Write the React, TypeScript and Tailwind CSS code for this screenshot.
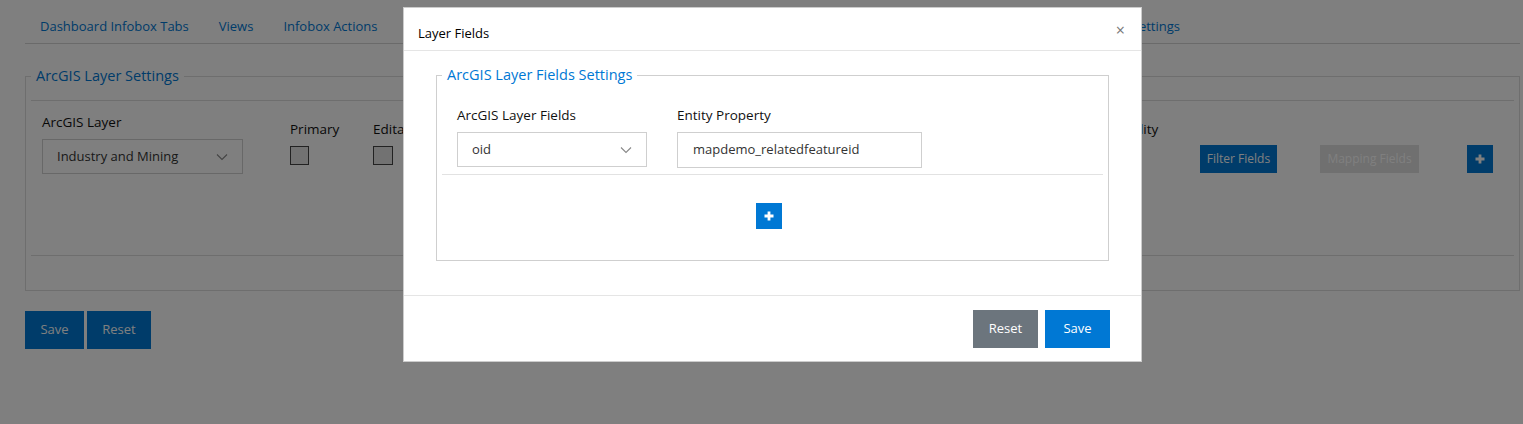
import React from 'react';

const Chevron = ({ className }: { className?: string }) => (
    <svg className={className} width="12" height="8" viewBox="0 0 12 8" fill="none">
        <polyline points="1,1.5 6,6.5 11,1.5" stroke="#888" strokeWidth="1.1" />
    </svg>
);

const PlusIcon = () => (
    <svg width="10" height="10" viewBox="0 0 10 10">
        <path d="M3.6 0.5h2.8v3.1h3.1v2.8H6.4v3.1H3.6V6.4H0.5V3.6h3.1z" fill="#fff" />
    </svg>
);

const App: React.FC = () => {
    return (
        <div className="relative w-[1523px] h-[424px] overflow-hidden bg-white text-[14px] text-[#222]" style={{ fontFamily: '"Open Sans", "Noto Sans", sans-serif' }}>
            {/* page behind the dialog */}
            <div className="pl-[25px] pr-[3px]">
                <ul className="flex pt-[16px] pb-[7px] pr-[325px] border-b border-[#d4d4d4]">
                    <li className="px-[15px] leading-[20px] text-[13px] text-[#0078d4] whitespace-nowrap">Dashboard Infobox Tabs</li>
                    <li className="px-[15px] leading-[20px] text-[13px] text-[#0078d4] whitespace-nowrap">Views</li>
                    <li className="px-[15px] leading-[20px] text-[13px] text-[#0078d4] whitespace-nowrap">Infobox Actions</li>
                    <li className="ml-auto px-[15px] leading-[20px] text-[13px] text-[#0078d4] whitespace-nowrap">Layer Settings</li>
                </ul>

                <fieldset className="mt-[21px] border border-[#dcdcdc] px-[5px]">
                    <legend className="px-[5px] text-[14.5px] leading-[22px] text-[#0078d4]">ArcGIS Layer Settings</legend>
                    <div className="h-[14px] border-b border-[#dcdcdc]" />
                    <div className="h-[155px] flex pl-[11px] border-b border-[#dcdcdc]">
                        <div className="w-[248px] pt-[11px]">
                            <div className="leading-[20px] text-[13.5px] text-[#111]">ArcGIS Layer</div>
                            <div className="mt-[7px] w-[201px] h-[35px] border border-[#d0d0d0] flex items-center justify-between pl-[14px] pr-[14px] text-[13px] text-[#333]">
                                <span>Industry and Mining</span>
                                <Chevron />
                            </div>
                        </div>
                        <div className="w-[83px] pt-[18px]">
                            <div className="leading-[20px] text-[13.5px] text-[#111]">Primary</div>
                            <div className="mt-[7px] w-[19px] h-[19px] border border-[#444] bg-[#e4e4e4]" />
                        </div>
                        <div className="w-[734px] pt-[18px]">
                            <div className="leading-[20px] text-[13.5px] text-[#111]">Editable</div>
                            <div className="mt-[7px] w-[20px] h-[19px] border border-[#444] bg-[#e4e4e4]" />
                        </div>
                        <div className="w-[93px] pt-[18px]">
                            <div className="leading-[20px] text-[13.5px] text-[#111]">Visibility</div>
                            <div className="mt-[7px] w-[20px] h-[19px] border border-[#444] bg-[#e4e4e4]" />
                        </div>
                        <div className="w-[120px] pt-[44px]">
                            <button className="h-[28px] w-[77px] bg-[#0078d4] text-white text-[12px]">Filter Fields</button>
                        </div>
                        <div className="w-[147px] pt-[44px]">
                            <button className="h-[28px] w-[99px] bg-[#e0e0e0] text-white text-[12px]">Mapping Fields</button>
                        </div>
                        <div className="pt-[44px]">
                            <button className="h-[28px] w-[26px] bg-[#0078d4] flex items-center justify-center"><PlusIcon /></button>
                        </div>
                    </div>
                    <div className="h-[34px]" />
                </fieldset>

                <div className="mt-[20px] flex gap-[3px]">
                    <button className="h-[38px] w-[59px] bg-[#0078d4] text-white text-[13px]">Save</button>
                    <button className="h-[38px] w-[64px] bg-[#0078d4] text-white text-[13px]">Reset</button>
                </div>
            </div>

            {/* backdrop */}
            <div className="absolute inset-0 bg-black/50" />

            {/* dialog */}
            <div className="absolute left-[403px] top-[7px] w-[739px] h-[355px] bg-white border border-black/20 flex flex-col">
                <div className="relative h-[43px] border-b border-[#e5e5e5] px-[14px] pt-[15px]">
                    <h5 className="leading-[20px] text-[13px] text-black">Layer Fields</h5>
                    <span className="absolute right-[16px] top-[12px] text-[16px] leading-[20px] text-[#777]">×</span>
                </div>

                <div className="flex-1 px-[32px] pt-[13px]">
                    <fieldset className="border border-[#cfcfcf] px-[5px] h-[197px]">
                        <legend className="px-[5px] text-[14.5px] leading-[22px] text-[#0078d4]">ArcGIS Layer Fields Settings</legend>
                        <div className="flex gap-[30px] px-[15px] pt-[19px] pb-[6px] border-b border-[#e2e2e2]">
                            <div>
                                <div className="leading-[20px] text-[13.5px] text-[#111]">ArcGIS Layer Fields</div>
                                <div className="mt-[7px] w-[190px] h-[35px] border border-[#cfcfcf] flex items-center justify-between pl-[14px] pr-[14px] text-[13px] text-[#333]">
                                    <span>oid</span>
                                    <Chevron />
                                </div>
                            </div>
                            <div>
                                <div className="leading-[20px] text-[13.5px] text-[#111]">Entity Property</div>
                                <div className="mt-[7px] w-[245px] h-[36px] border border-[#cfcfcf] flex items-center pl-[15px] text-[13px] text-[#333]">mapdemo_relatedfeatureid</div>
                            </div>
                        </div>
                        <div className="flex justify-center pr-[8px] pt-[28px]">
                            <button className="h-[26px] w-[26px] bg-[#0078d4] flex items-center justify-center"><PlusIcon /></button>
                        </div>
                    </fieldset>
                </div>

                <div className="h-[66px] border-t border-[#e5e5e5] flex justify-end items-start gap-[7px] pt-[14px] pr-[31px]">
                    <button className="h-[38px] w-[65px] bg-[#6c757d] text-white text-[13px]">Reset</button>
                    <button className="h-[38px] w-[65px] bg-[#0078d4] text-white text-[13px]">Save</button>
                </div>
            </div>
        </div>
    );
};

export default App;
